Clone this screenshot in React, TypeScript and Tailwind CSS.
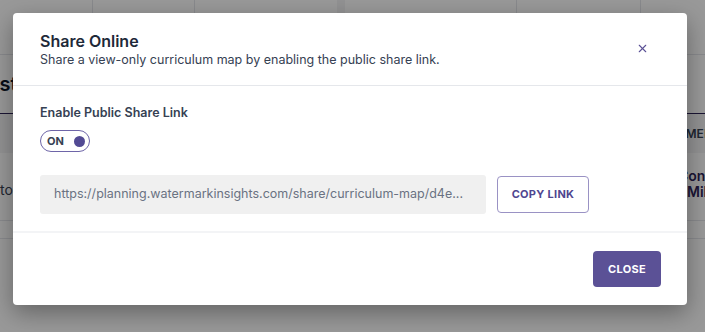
import { X } from "lucide-react";

export default function App() {
  return (
    <div className="relative h-[332px] w-[705px] overflow-hidden bg-white font-['Inter','Noto_Sans',sans-serif]">
      {/* page behind the dialog */}
      <div className="flex h-[55px] border-b border-gray-200">
        <div className="w-[93px] border-r border-gray-200" />
        <div className="w-[102px] border-r border-gray-200" />
        <div className="w-[150px] border-r-8 border-gray-100" />
        <div className="w-[172px] border-r border-gray-200" />
        <div className="w-[124px] border-r border-gray-200" />
        <div className="flex-1" />
      </div>
      <div className="flex h-[58px] items-center text-[20px] font-semibold text-gray-900">
        <span className="-ml-[17px]">List</span>
      </div>
      <div className="flex h-[40px] items-center justify-end border-t border-[#2d2457] bg-gray-100 text-[12px] font-semibold text-gray-700">
        <span className="-mr-[8px]">COMMEN</span>
      </div>
      <div className="flex h-[68px] items-center justify-between border-b border-gray-200 text-[14px] text-gray-700">
        <span className="mt-[6px]">to</span>
        <div className="-mr-[13px] -mt-[6px] w-[40px] whitespace-nowrap font-semibold leading-[16px] text-[#2d2457]">
          <div>Cont</div>
          <div className="pl-[9px]">Mile</div>
        </div>
      </div>
      <div className="h-[18px] border-b border-gray-200" />

      {/* overlay */}
      <div className="absolute inset-0 bg-black/40">
        <div className="absolute left-[13px] top-[13px] w-[674px] rounded-[4px] bg-white shadow-[0_8px_24px_rgba(0,0,0,0.35)]">
          <div className="flex items-start justify-between border-b border-gray-200 px-[27px] pb-[17px] pt-[18px]">
            <div>
              <h2 className="text-[16px] font-semibold leading-[20px] text-gray-800">Share Online</h2>
              <p className="text-[12.5px] leading-[17px] text-gray-700">
                Share a view-only curriculum map by enabling the public share link.
              </p>
            </div>
            <button className="mr-[11px] mt-[11px] text-[#5b5196]">
              <X size={13} strokeWidth={2} />
            </button>
          </div>

          <div className="border-b-2 border-gray-100 px-[27px] pb-[17px] pt-[19px]">
            <label className="block text-[12.5px] font-semibold leading-[16px] text-gray-700">
              Enable Public Share Link
            </label>
            <div className="mt-[9px] flex h-[22px] w-[50px] items-center justify-between rounded-full border-[1.5px] border-[#6e65a8] pl-[6px] pr-[4px]">
              <span className="text-[11px] font-bold text-gray-700">ON</span>
              <span className="h-[11px] w-[11px] rounded-full bg-[#524a94]" />
            </div>
            <div className="mt-[23px] flex items-center gap-[11px]">
              <div className="flex h-[39px] w-[446px] items-center whitespace-nowrap rounded-[3px] bg-[#f0f0f0] px-[14px] text-[12.5px] text-gray-500">
                https://planning.watermarkinsights.com/share/curriculum-map/d4e...
              </div>
              <button className="h-[37px] w-[92px] rounded-[4px] border border-[#9a92c4] bg-white text-[11px] font-bold tracking-[0.3px] text-[#4f4690]">
                COPY LINK
              </button>
            </div>
          </div>

          <div className="flex justify-end px-[26px] py-[18px]">
            <button className="h-[36px] w-[68px] rounded-[4px] bg-[#5b5196] text-[11px] font-bold tracking-[0.3px] text-white">
              CLOSE
            </button>
          </div>
        </div>
      </div>
    </div>
  );
}
